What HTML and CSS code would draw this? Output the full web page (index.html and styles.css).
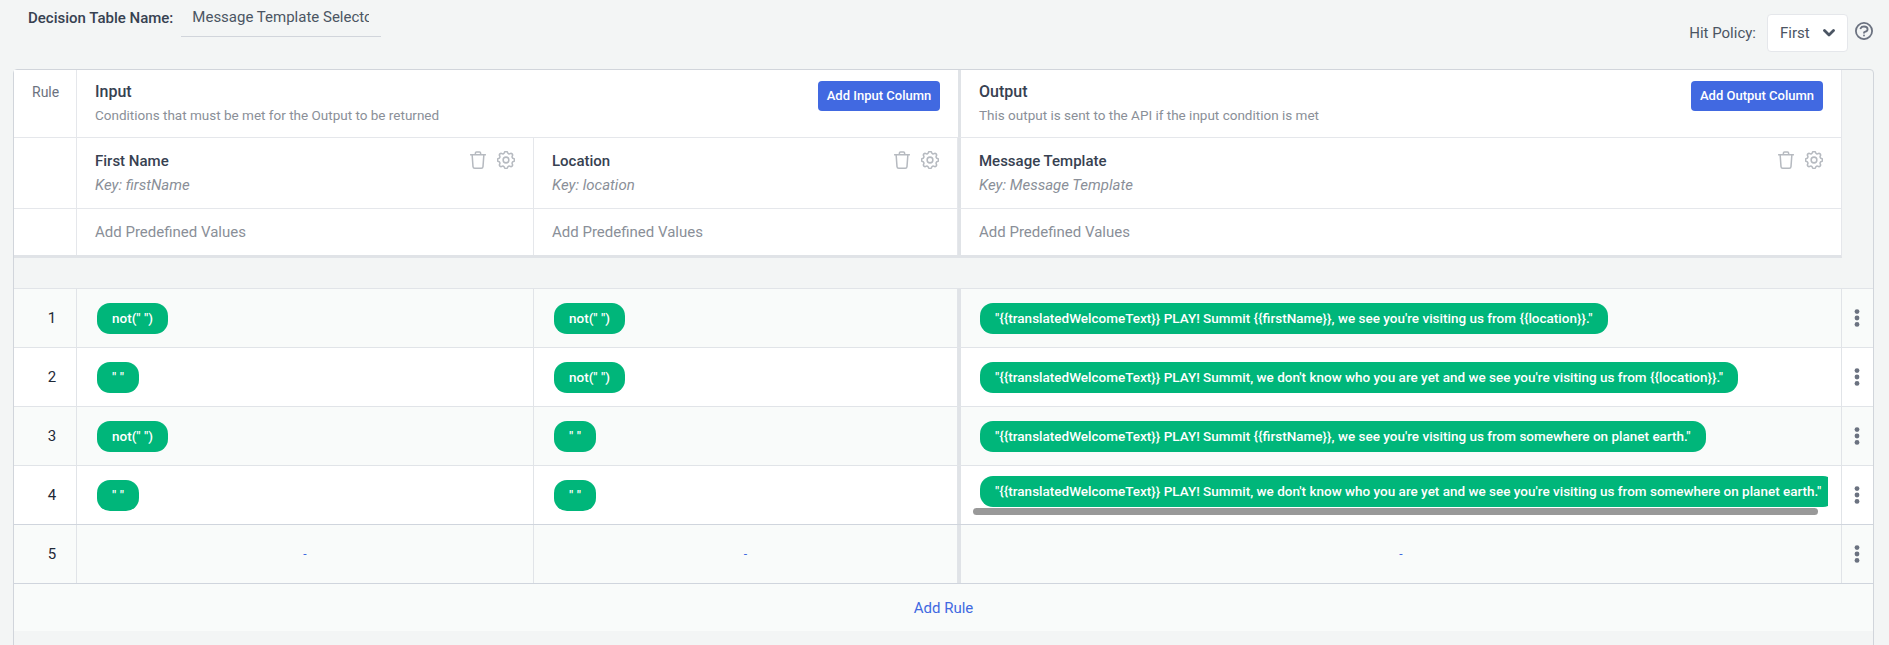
FILE: index.html
```html
<!DOCTYPE html>
<html lang="en">
<head>
<meta charset="utf-8">
<title>Decision Table</title>
<link rel="stylesheet" href="styles.css">
</head>
<body>
<svg class="defs" width="0" height="0" aria-hidden="true">
  <symbol id="trash" viewBox="0 0 16 18"><path d="M2.2 4.6 3 15.6c.1 1 .8 1.6 1.7 1.6h6.6c.9 0 1.6-.6 1.7-1.6l.8-11M.6 3.8h14.8M5.4 3.6V2c0-.7.4-1.1 1.1-1.1h3c.7 0 1.1.4 1.1 1.1v1.6" fill="none" stroke="currentColor" stroke-width="1.5" stroke-linecap="round" stroke-linejoin="round"/></symbol>
  <symbol id="gear" viewBox="2.6 2.6 18.8 18.8"><path d="M10.325 4.317c.426-1.756 2.924-1.756 3.35 0a1.724 1.724 0 002.573 1.066c1.543-.94 3.31.826 2.37 2.37a1.724 1.724 0 001.065 2.572c1.756.426 1.756 2.924 0 3.35a1.724 1.724 0 00-1.066 2.573c.94 1.543-.826 3.31-2.37 2.37a1.724 1.724 0 00-2.572 1.065c-.426 1.756-2.924 1.756-3.35 0a1.724 1.724 0 00-2.573-1.066c-1.543.94-3.31-.826-2.37-2.37a1.724 1.724 0 00-1.065-2.572c-1.756-.426-1.756-2.924 0-3.35a1.724 1.724 0 001.066-2.573c-.94-1.543.826-3.31 2.37-2.37.996.608 2.296.07 2.572-1.065zM15 12a3 3 0 11-6 0 3 3 0 016 0z" fill="none" stroke="currentColor" stroke-width="1.6" stroke-linejoin="round"/></symbol>
  <symbol id="dots" viewBox="0 0 6 18"><circle cx="3" cy="2.6" r="2.4"/><circle cx="3" cy="9" r="2.4"/><circle cx="3" cy="15.4" r="2.4"/></symbol>
</svg>

<header class="topbar">
  <div class="name-field">
    <label class="name-label" for="table-name">Decision Table Name:</label>
    <input class="name-input" id="table-name" type="text" value="Message Template Selector" readonly>
  </div>
  <div class="policy">
    <span class="policy-label">Hit Policy:</span>
    <div class="select"><span>First</span>
      <svg class="chevron" viewBox="0 0 12 8"><path d="M1.5 1.5 6 6l4.500-4.500" fill="none" stroke="currentColor" stroke-width="2.800" stroke-linecap="round" stroke-linejoin="round"/></svg>
    </div>
    <svg class="help" viewBox="2 2 20 20"><path d="M8.228 9c.549-1.165 2.03-2 3.772-2 2.21 0 4 1.343 4 3 0 1.400-1.278 2.575-3.006 2.907-.542.104-.994.54-.994 1.093m0 3h.01M21 12a9 9 0 11-18 0 9 9 0 0118 0z" fill="none" stroke="currentColor" stroke-width="2" stroke-linecap="round" stroke-linejoin="round"/></svg>
  </div>
</header>

<main class="panel">
  <section class="head">
    <div class="cell-rule rule-title">Rule</div>
    <div class="section-head span-2">
      <div>
        <h2 class="section-title">Input</h2>
        <p class="section-desc">Conditions that must be met for the Output to be returned</p>
      </div>
      <button class="btn btn-input">Add Input Column</button>
    </div>
    <div class="section-head sep out">
      <div>
        <h2 class="section-title">Output</h2>
        <p class="section-desc">This output is sent to the API if the input condition is met</p>
      </div>
      <button class="btn btn-output">Add Output Column</button>
    </div>

    <div class="cell-rule"></div>
    <div class="col-head">
      <div><div class="col-name">First Name</div><div class="col-key">Key: firstName</div></div>
      <div class="col-icons"><svg class="i-trash"><use href="#trash"/></svg><svg class="i-gear"><use href="#gear"/></svg></div>
    </div>
    <div class="col-head col-second">
      <div><div class="col-name">Location</div><div class="col-key">Key: location</div></div>
      <div class="col-icons"><svg class="i-trash"><use href="#trash"/></svg><svg class="i-gear"><use href="#gear"/></svg></div>
    </div>
    <div class="col-head sep out">
      <div><div class="col-name">Message Template</div><div class="col-key">Key: Message Template</div></div>
      <div class="col-icons"><svg class="i-trash"><use href="#trash"/></svg><svg class="i-gear"><use href="#gear"/></svg></div>
    </div>

    <div class="cell-rule last"></div>
    <div class="predef last">Add Predefined Values</div>
    <div class="predef last col-second">Add Predefined Values</div>
    <div class="predef last sep out">Add Predefined Values</div>
  </section>

  <section class="rows">
    <div class="row odd">
      <div class="num">1</div>
      <div class="entry"><span class="pill">not(" ")</span></div>
      <div class="entry"><span class="pill">not(" ")</span></div>
      <div class="entry output"><div class="scroller"><span class="pill">"{{translatedWelcomeText}} PLAY! Summit {{firstName}}, we see you're visiting us from {{location}}."</span></div></div>
      <div class="more"><svg class="i-dots"><use href="#dots"/></svg></div>
    </div>
    <div class="row">
      <div class="num">2</div>
      <div class="entry"><span class="pill">" "</span></div>
      <div class="entry"><span class="pill">not(" ")</span></div>
      <div class="entry output"><div class="scroller"><span class="pill">"{{translatedWelcomeText}} PLAY! Summit, we don't know who you are yet and we see you're visiting us from {{location}}."</span></div></div>
      <div class="more"><svg class="i-dots"><use href="#dots"/></svg></div>
    </div>
    <div class="row odd">
      <div class="num">3</div>
      <div class="entry"><span class="pill">not(" ")</span></div>
      <div class="entry"><span class="pill">" "</span></div>
      <div class="entry output"><div class="scroller"><span class="pill">"{{translatedWelcomeText}} PLAY! Summit {{firstName}}, we see you're visiting us from somewhere on planet earth."</span></div></div>
      <div class="more"><svg class="i-dots"><use href="#dots"/></svg></div>
    </div>
    <div class="row">
      <div class="num">4</div>
      <div class="entry"><span class="pill">" "</span></div>
      <div class="entry"><span class="pill">" "</span></div>
      <div class="entry output"><div class="scroller"><span class="pill">"{{translatedWelcomeText}} PLAY! Summit, we don't know who you are yet and we see you're visiting us from somewhere on planet earth."</span><div class="thumb"></div></div></div>
      <div class="more"><svg class="i-dots"><use href="#dots"/></svg></div>
    </div>
    <div class="row odd strong">
      <div class="num">5</div>
      <div class="entry empty">-</div>
      <div class="entry empty">-</div>
      <div class="entry output empty">-</div>
      <div class="more"><svg class="i-dots"><use href="#dots"/></svg></div>
    </div>
    <div class="add-rule strong">Add Rule</div>
  </section>
</main>
</body>
</html>
```

FILE: styles.css
```css
* { box-sizing: border-box; }
html, body { margin: 0; height: 100%; overflow: hidden; }
body {
  background: #f3f5f5;
  color: #374151;
  font-family: Roboto, "Liberation Sans", sans-serif;
  font-size: 15px;
}
.defs { position: absolute; }

.topbar {
  height: 69px;
  display: flex;
  justify-content: space-between;
  align-items: flex-start;
  padding-left: 28px;
  padding-right: 16px;
}
.name-field { display: flex; align-items: flex-start; gap: 8px; }
.name-label { font-weight: 500; line-height: 16px; margin-top: 10px; }
.name-input {
  display: block;
  width: 200px;
  height: 37px;
  margin: 0;
  padding: 0 12px 2px 11px;
  background: transparent;
  border: 0;
  border-bottom: 1px solid #d1d5db;
  border-radius: 0;
  outline: 0;
  font: 400 15px/18px Roboto, "Liberation Sans", sans-serif;
  color: #4b5563;
}

.policy { display: flex; align-items: flex-start; padding-top: 14px; }
.policy-label { line-height: 38px; color: #4b5563; margin-right: 11px; }
.select {
  width: 81px;
  height: 38px;
  display: flex;
  align-items: center;
  justify-content: space-between;
  padding: 0 12px;
  background: #fff;
  border: 1px solid #e5e7eb;
  border-radius: 4px;
  color: #4b5563;
}
.chevron { width: 12px; height: 8px; color: #4b5563; }
.help { width: 18px; height: 18px; margin: 8px 0 0 7px; color: #6b7280; }

.panel {
  margin: 0 15px 0 13px;
  height: 620px;
  border: 1px solid #d1d5db;
  border-radius: 4px 4px 0 0;
}
.head {
  width: 1828px;
  display: grid;
  grid-template-columns: 63px 457px 424px 884px;
  grid-template-rows: 68px 71px 46px;
  background: #fff;
  border-bottom: 3px solid #e0e3e7;
  border-right: 1px solid #e5e7eb;
  height: 188px;
}
.head > * { border-bottom: 1px solid #e5e7eb; }
.head > .last { border-bottom: 0; }
.cell-rule { border-right: 1px solid #e5e7eb; }
.rule-title { padding: 14px 0 0 18px; color: #6b7280; font-size: 14px; line-height: 17px; }
.span-2 { grid-column: span 2; }
.section-head {
  display: flex;
  justify-content: space-between;
  align-items: flex-start;
  padding: 11px 18px 0 18px;
}
.sep { border-left: 3px solid #e0e3e7; }
.section-head.out, .col-head.out, .predef.out { padding-left: 18px; }
.section-head.out, .col-head.out { padding-right: 19px; }
.section-title { margin: 0; font-size: 16px; font-weight: 500; line-height: 22px; color: #374151; }
.section-desc { margin: 3px 0 0; font-size: 13.5px; line-height: 18px; color: #8a8f98; }
.btn {
  height: 30px;
  padding: 0;
  border: 0;
  border-radius: 4px;
  background: #4169e1;
  color: #fff;
  font: 500 13px/30px Roboto, "Liberation Sans", sans-serif;
}
.btn-input { width: 122px; }
.btn-output { width: 132px; }

.col-head {
  display: flex;
  justify-content: space-between;
  align-items: flex-start;
  padding: 14px 18px 0 18px;
  border-right: 1px solid #e5e7eb;
}
.col-head.out { border-right: 0; }
.col-second { padding-left: 18px; }
.col-name { font-weight: 500; line-height: 18px; color: #374151; }
.col-key { margin-top: 6px; font-style: italic; line-height: 18px; color: #8a8f98; }
.col-icons { display: flex; align-items: center; gap: 11px; margin-top: -1px; color: #b6bac0; }
.i-trash { width: 16px; height: 18px; }
.i-gear { width: 18px; height: 18px; }

.predef {
  padding: 14px 18px 0;
  line-height: 18px;
  color: #8a8f98;
  border-right: 1px solid #e5e7eb;
}
.predef.out { border-right: 0; }

.rows { margin-top: 30px; }
.row {
  display: grid;
  grid-template-columns: 63px 457px 424px 884px 1fr;
  height: 59px;
  background: #fff;
  border-top: 1px solid #e1e4e8;
}
.row.odd { background: #f9fbfa; }
.row.strong, .add-rule.strong { border-top-color: #d0d5dd; }
.row > * { display: flex; align-items: center; border-right: 1px solid #e1e4e8; }
.num { justify-content: center; color: #1f2937; font-size: 15px; padding-left: 14px; }
.entry { padding-left: 20px; }
.entry.output { padding: 0 12px; border-left: 3px solid #e0e3e7; border-right: 1px solid #e1e4e8; }
.more { justify-content: center; border-right: 0 !important; color: #6b7280; padding-right: 1px; }
.i-dots { width: 6px; height: 18px; fill: currentColor; }

.pill {
  display: inline-flex;
  align-items: center;
  flex: none;
  height: 31px;
  padding: 0 15px;
  border-radius: 13px;
  background: #00b67a;
  color: #fff;
  font-size: 13.5px;
  font-weight: 500;
  white-space: nowrap;
}
.scroller { width: 855px; padding-left: 7px; overflow: hidden; }
.thumb { width: 845px; height: 7px; margin: 1px 0 0 -7px; border-radius: 4px; background: #999; }
.empty { justify-content: center; padding: 0; color: #4169e1; font-size: 12px; }
.entry.empty.output { padding: 0; }
.add-rule {
  height: 48px;
  display: flex;
  align-items: center;
  justify-content: center;
  background: #f9fbfa;
  border-top: 1px solid #d0d5dd;
  color: #4169e1;
}
```
